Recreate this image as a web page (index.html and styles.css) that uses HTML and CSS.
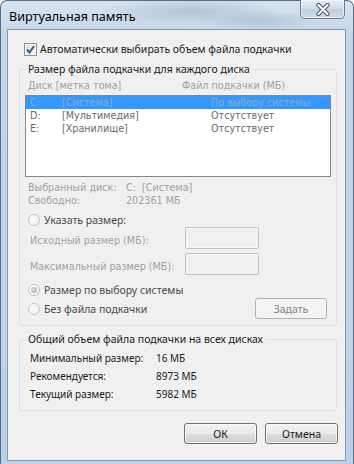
FILE: index.html
```html
<!DOCTYPE html>
<html lang="ru">
<head>
<meta charset="utf-8">
<title>Виртуальная память</title>
<link rel="stylesheet" href="styles.css">
</head>
<body>
<div class="window">
  <div class="titlebar">
    <span class="title">Виртуальная память</span>
    <div class="close">
      <svg width="20" height="13" viewBox="0 0 20 13">
        <path d="M5.5 2 L14.5 11 M14.5 2 L5.5 11" stroke="#46546a" stroke-width="4.2" stroke-linecap="round"/>
        <path d="M5.5 2 L14.5 11 M14.5 2 L5.5 11" stroke="#ffffff" stroke-width="2.2" stroke-linecap="round"/>
      </svg>
    </div>
  </div>
  <div class="client">
    <div class="check-row">
      <span class="checkbox">
        <svg width="11" height="11" viewBox="0 0 11 11"><path d="M2 5.5 L4.5 8.5 L9 2" fill="none" stroke="#3d5a98" stroke-width="2"/></svg>
      </span>
      <span class="seg">Автоматически выбирать объем файла подкачки</span>
    </div>

    <fieldset class="group group-disks">
      <legend class="seg">Размер файла подкачки для каждого диска</legend>
      <div class="headers tah disabled">
        <span class="hcol1">Диск [метка тома]</span>
        <span>Файл подкачки (МБ)</span>
      </div>
      <div class="listbox tah">
        <div class="lrow selected"><span class="c1">C:</span><span class="c2">[Система]</span><span>По выбору системы</span></div>
        <div class="lrow"><span class="c1">D:</span><span class="c2">[Мультимедия]</span><span>Отсутствует</span></div>
        <div class="lrow"><span class="c1">E:</span><span class="c2">[Хранилище]</span><span>Отсутствует</span></div>
      </div>
      <div class="info tah disabled">
        <div class="irow"><span class="ilabel">Выбранный диск:</span><span>C:&nbsp; [Система]</span></div>
        <div class="irow"><span class="ilabel">Свободно:</span><span>202361 МБ</span></div>
      </div>
      <div class="radio-row seg first-radio">
        <span class="radio"></span><span class="rlabel">Указать размер:</span>
      </div>
      <div class="size-row">
        <span class="tah disabled size-label">Исходный размер (МБ):</span>
        <span class="input"></span>
      </div>
      <div class="size-row second">
        <span class="tah disabled size-label">Максимальный размер (МБ):</span>
        <span class="input"></span>
      </div>
      <div class="radio-row seg system-radio">
        <span class="radio checked"></span><span class="rlabel">Размер по выбору системы</span>
      </div>
      <div class="radio-row seg last-row">
        <span class="radio"></span><span class="rlabel nofile">Без файла подкачки</span>
        <span class="btn btn-disabled set-btn">Задать</span>
      </div>
    </fieldset>

    <fieldset class="group group-total">
      <legend class="seg">Общий объем файла подкачки на всех дисках</legend>
      <div class="totals">
        <span>Минимальный размер:</span><span>16 МБ</span>
        <span>Рекомендуется:</span><span>8973 МБ</span>
        <span>Текущий размер:</span><span>5982 МБ</span>
      </div>
    </fieldset>

    <div class="buttons">
      <span class="btn">ОК</span>
      <span class="btn">Отмена</span>
    </div>
  </div>
</div>
</body>
</html>
```

FILE: styles.css
```css
* { box-sizing: border-box; }
html, body { margin: 0; padding: 0; background: #ffffff; }
body { width: 354px; height: 464px; overflow: hidden; font-family: "Noto Sans", "Open Sans", sans-serif; font-size: 10.5px; color: #1a1a1a; white-space: nowrap; }

.seg { font-family: "Noto Sans", "Open Sans", sans-serif; font-size: 10.5px; }
.tah { font-family: "DejaVu Sans", "Liberation Sans", sans-serif; font-size: 9.6px; }
.disabled { color: #a0a0a0; }

.window {
  width: 354px; height: 464px;
  border: 1px solid #5b6b80;
  border-bottom: none;
  border-radius: 7px 7px 0 0;
  background:
    radial-gradient(ellipse 90px 14px at 190px 10px, rgba(120,140,165,0.35), rgba(120,140,165,0) 100%),
    radial-gradient(ellipse 60px 10px at 260px 20px, rgba(120,140,165,0.3), rgba(120,140,165,0) 100%),
    linear-gradient(#d7e3f0, #c3d5e9 40px, #bcd0e7);
  padding: 0 7px 3px 6px;
  display: flex; flex-direction: column;
}
.titlebar { height: 28px; display: flex; align-items: flex-start; justify-content: space-between; }
.title { margin: 7px 0 0 2px; font-size: 12.6px; color: #000; font-family: "Noto Sans", sans-serif; }
.close {
  width: 45px; height: 19px; margin-top: -1px; margin-right: 1px;
  border: 1px solid #6d7b8f; border-top: none;
  border-radius: 0 0 5px 5px;
  background: linear-gradient(#e6ecf4, #d2dde9 50%, #c2cfdf 51%, #d0dbe8);
  box-shadow: inset 0 0 0 1px rgba(255,255,255,0.6);
  display: flex; align-items: center; justify-content: center;
}
.close svg { display: block; }

.client {
  flex: 1;
  background: #f0f0f0;
  border: 1px solid #8799ad;
  display: flex; flex-direction: column;
}

.check-row { display: flex; align-items: center; height: 16px; margin: 11px 0 0 16px; gap: 3px; }
.checkbox {
  width: 13px; height: 13px; border: 1px solid #8e8f8f;
  background: linear-gradient(135deg, #dcdcdc, #fbfbfb);
  box-shadow: inset 0 0 0 1px #f4f4f4;
  display: flex; align-items: center; justify-content: center;
}
.checkbox svg { display: block; }

.group {
  margin: 0 8px 0 11px;
  padding: 0 5px 6px 5px;
  border: 1px solid #d5dfe5;
  border-radius: 3px;
  min-width: 0;
}
.group legend { padding: 0 2px; margin-left: 1px; line-height: 15px; color: #1a1a1a; }
.group-disks { margin-top: 5px; }

.headers { display: flex; height: 14px; line-height: 14px; margin-top: 2px; padding-left: 3px; }
.hcol1 { width: 154px; }

.listbox {
  margin-top: 2px;
  height: 82px;
  background: #fff;
  border: 1px solid #828790;
  color: #6a6a6a;
}
.lrow { display: flex; height: 13px; line-height: 13px; padding-left: 4px; }
.lrow .c1 { width: 32px; }
.lrow .c2 { width: 149px; }
.lrow.selected { background: #3399ff; color: #86acd6; }

.info { margin-top: 4px; }
.irow { display: flex; height: 13px; line-height: 13px; padding-left: 3px; }
.ilabel { width: 98px; }

.radio-row { display: flex; align-items: center; gap: 4px; padding-left: 3px; }
.rlabel { color: #4a4a4a; }
.first-radio { height: 14px; margin-top: 6px; }
.radio {
  width: 12px; height: 12px; border-radius: 50%;
  border: 1px solid #c4c4c4;
  background: radial-gradient(circle at 40% 40%, #fcfcfc, #ececec);
  flex: none;
  display: flex; align-items: center; justify-content: center;
}
.radio.checked::after {
  content: ""; width: 6px; height: 6px; border-radius: 50%;
  background: radial-gradient(circle at 40% 40%, #d8d8d8, #a9a9a9);
}

.size-row { display: flex; align-items: center; justify-content: space-between; height: 22px; padding-left: 5px; padding-right: 72px; }
.size-row.second { margin-top: 4px; }
.size-label { margin-top: 4px; }
.input { width: 74px; height: 22px; border: 1px solid #c2c2c2; border-radius: 2px; background: #f0f0f0; box-shadow: inset 0 0 0 1px #f7f7f7; }

.system-radio { height: 14px; margin-top: 8px; }
.last-row { height: 21px; margin-top: 1px; padding-right: 4px; }
.nofile { flex: 1; }

.btn {
  display: flex; align-items: center; justify-content: center;
  height: 21px; width: 73px;
  border: 1px solid #707070; border-radius: 3px;
  background: linear-gradient(#f2f2f2, #ebebeb 50%, #dddddd 51%, #cfcfcf);
  box-shadow: inset 0 0 0 1px rgba(255,255,255,0.7);
  font-family: "Noto Sans", sans-serif; font-size: 10.5px; color: #1a1a1a;
}
.btn-disabled { border-color: #adb2b5; background: #f4f4f4; color: #838383; box-shadow: none; width: 72px; flex: none; }

.group-total { margin-top: 6px; padding-bottom: 7px; }
.totals {
  display: grid;
  grid-template-columns: 126px auto;
  grid-auto-rows: 18px;
  align-items: center;
  margin-top: 2px;
  padding-left: 5px;
  font-family: "Noto Sans", "Open Sans", sans-serif;
  font-size: 10px;
}

.buttons { display: flex; justify-content: flex-end; gap: 8px; margin: 12px 7px 0 0; }
```
